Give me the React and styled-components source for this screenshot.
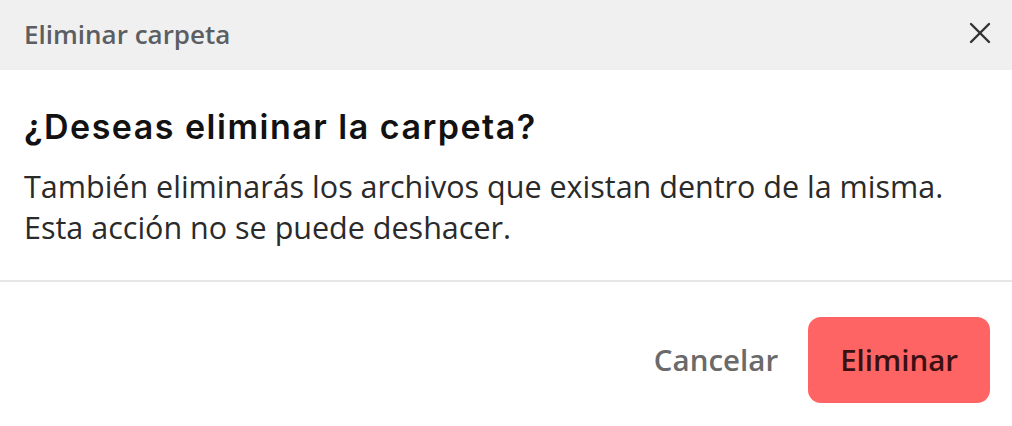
import React from 'react';
import styled, { createGlobalStyle } from 'styled-components';

const GlobalStyle = createGlobalStyle`
    html, body {
        margin: 0;
        padding: 0;
        background: #ffffff;
        font-family: 'Open Sans', 'Liberation Sans', sans-serif;
    }
`;

function CloseIcon() {
    return (
        <svg width='22' height='22' viewBox='0 0 22 22' fill='none' stroke='#333333' strokeWidth='2.4' strokeLinecap='round'>
            <line x1='2' y1='2' x2='20' y2='20' />
            <line x1='20' y1='2' x2='2' y2='20' />
        </svg>
    );
}

function App() {
    return (
        <>
            <GlobalStyle />
            <StyledDialog>
                <StyledHeader>
                    <StyledHeaderTitle>Eliminar carpeta</StyledHeaderTitle>
                    <StyledCloseButton aria-label='Cerrar'>
                        <CloseIcon />
                    </StyledCloseButton>
                </StyledHeader>
                <StyledBody>
                    <StyledQuestion>¿Deseas eliminar la carpeta?</StyledQuestion>
                    <StyledMessage>
                        También eliminarás los archivos que existan dentro de la misma.
                        <br />
                        Esta acción no se puede deshacer.
                    </StyledMessage>
                </StyledBody>
                <StyledFooter>
                    <StyledButton>Cancelar</StyledButton>
                    <StyledButton danger>Eliminar</StyledButton>
                </StyledFooter>
            </StyledDialog>
        </>
    );
}

const StyledDialog = styled.div`
    width: 1012px;
    display: flex;
    flex-direction: column;
    background: #ffffff;
`;

const StyledHeader = styled.div`
    height: 70px;
    padding: 0 21px 0 24px;
    display: flex;
    align-items: center;
    justify-content: space-between;
    background: #f0f0f0;
    box-sizing: border-box;
`;

const StyledHeaderTitle = styled.span`
    font-size: 26px;
    font-weight: 600;
    color: #5b5e63;
    margin-top: -2px;
`;

const StyledCloseButton = styled.button`
    border: none;
    background: none;
    padding: 0;
    display: flex;
    cursor: pointer;
    margin-top: -4px;
`;

const StyledBody = styled.div`
    padding: 36px 24px 32px;
    display: flex;
    flex-direction: column;
    gap: 19px;
`;

const StyledQuestion = styled.h2`
    margin: 0;
    font-family: Inter, 'DejaVu Sans', sans-serif;
    font-size: 34px;
    line-height: 41px;
    font-weight: 600;
    letter-spacing: 1.5px;
    color: #121212;
`;

const StyledMessage = styled.p`
    margin: 0;
    font-size: 30.5px;
    line-height: 41px;
    color: #2a2a2a;
`;

const StyledFooter = styled.div`
    border-top: 2px solid #e6e6e6;
    padding: 35px 22px 22px;
    display: flex;
    justify-content: flex-end;
`;

const StyledButton = styled.button`
    border: none;
    border-radius: 13px;
    padding: 23px ${props => props.danger ? '32px' : '30px'};
    font-family: 'Open Sans', 'Liberation Sans', sans-serif;
    font-size: 29.5px;
    line-height: 40px;
    font-weight: 600;
    background: ${props => props.danger ? '#ff6464' : 'transparent'};
    color: ${props => props.danger ? '#3b1010' : '#6a6a6a'};
    cursor: pointer;
`;

export default App;
